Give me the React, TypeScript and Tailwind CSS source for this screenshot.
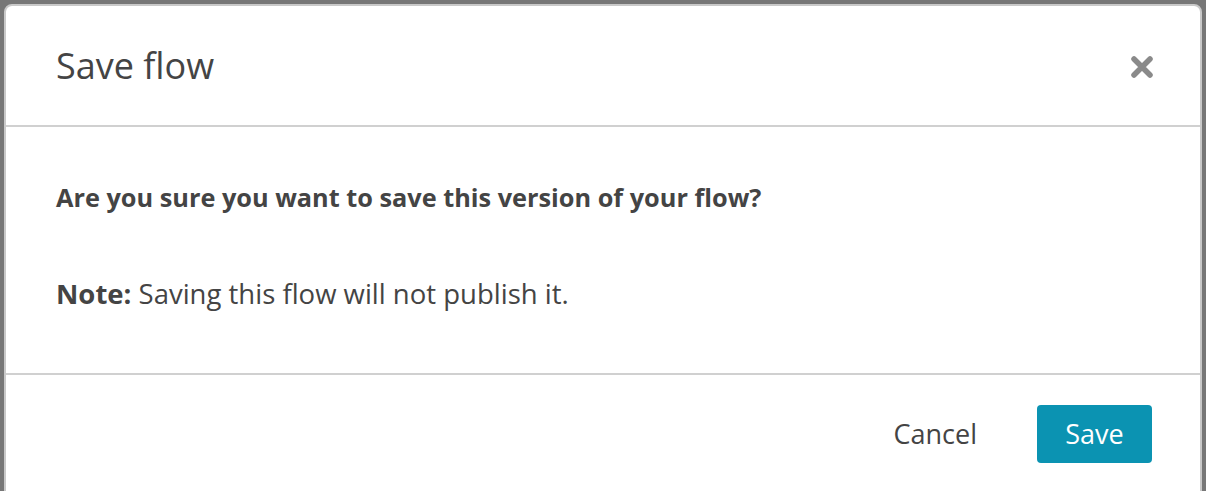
export default function App() {
  return (
    <div className="h-[491px] w-[1206px] overflow-hidden bg-[#777777] pl-[4px] pr-[4px] pt-[4px] font-['Open_Sans',sans-serif]">
      <div className="h-[520px] rounded-t-[8px] border-2 border-[#c9c9c9] bg-white">
        <div className="flex h-[121px] items-center justify-between border-b-2 border-[#d0d0d0] pl-[50px] pr-[46px]">
          <h2 className="text-[36px] leading-none text-[#444444]">Save flow</h2>
          <button className="mt-[2px] flex h-[24px] w-[24px] items-center justify-center" aria-label="Close">
            <svg width="24" height="24" viewBox="0 0 24 24">
              <path d="M4 4 L20 20 M20 4 L4 20" stroke="#8a8a8a" strokeWidth="5.5" strokeLinecap="round" />
            </svg>
          </button>
        </div>
        <div className="flex h-[248px] flex-col border-b-2 border-[#d0d0d0] pl-[50px] pt-[55px]">
          <p className="text-[25.3px] font-bold leading-[30px] text-[#444444]">
            Are you sure you want to save this version of your flow?
          </p>
          <p className="mt-[67px] text-[27.5px] leading-[30px] text-[#444444]">
            <span className="font-bold">Note:</span> Saving this flow will not publish it.
          </p>
        </div>
        <div className="flex items-center justify-end gap-[60px] pr-[48px] pt-[30px]">
          <button className="text-[27px] text-[#444444]">Cancel</button>
          <button className="h-[58px] w-[115px] rounded-[4px] bg-[#0b93b2] text-[27px] text-white">Save</button>
        </div>
      </div>
    </div>
  );
}
